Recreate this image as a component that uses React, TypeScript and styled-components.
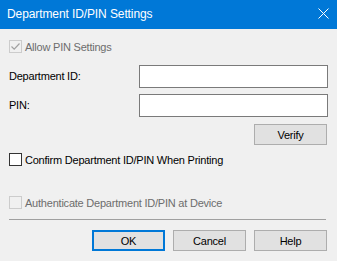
import React from "react";
import styled, { createGlobalStyle } from "styled-components";

const GlobalStyle = createGlobalStyle`
  html, body {
    margin: 0;
    padding: 0;
    background: #f0f0f0;
  }
`;

const Window = styled.div`
  width: 337px;
  height: 261px;
  background: #f0f0f0;
  font-family: "Liberation Sans", Arial, sans-serif;
  font-size: 11px;
  letter-spacing: -0.22px;
  color: #000;
  display: flex;
  flex-direction: column;
  overflow: hidden;
`;

const TitleBar = styled.div`
  height: 29px;
  background: #0078d7;
  color: #fff;
  display: flex;
  align-items: center;
  justify-content: space-between;
  padding: 0 8px 0 7px;
  font-size: 12px;
  letter-spacing: -0.1px;
  flex-shrink: 0;
`;

const Title = styled.span`
  position: relative;
  top: -1px;
`;

const CloseButton = styled.div`
  width: 11px;
  height: 11px;
  display: flex;
  position: relative;
  top: -1px;
`;

const Body = styled.div`
  display: flex;
  flex-direction: column;
  padding: 0 9px;
`;

const CheckRow = styled.label<{ $top: number; $disabled?: boolean }>`
  display: flex;
  align-items: center;
  height: 13px;
  margin-top: ${(p) => p.$top}px;
  color: ${(p) => (p.$disabled ? "#6d6d6d" : "#000")};
`;

const Box = styled.span<{ $disabled?: boolean }>`
  width: 13px;
  height: 13px;
  box-sizing: border-box;
  border: 1px solid ${(p) => (p.$disabled ? "#cccccc" : "#333333")};
  background: ${(p) => (p.$disabled ? "#f0f0f0" : "#ffffff")};
  display: flex;
  align-items: center;
  justify-content: center;
  flex-shrink: 0;
`;

const CheckText = styled.span`
  margin-left: 3px;
  white-space: nowrap;
`;

const FieldRow = styled.div<{ $top: number }>`
  display: grid;
  grid-template-columns: 130px 189px;
  align-items: center;
  height: 23px;
  margin-top: ${(p) => p.$top}px;
`;

const FieldLabel = styled.span`
  position: relative;
  top: -1px;
`;

const TextInput = styled.div`
  height: 23px;
  box-sizing: border-box;
  border: 1px solid #7a7a7a;
  background: #fff;
`;

const ButtonRow = styled.div<{ $top: number }>`
  display: flex;
  justify-content: flex-end;
  gap: 8px;
  padding-right: 1px;
  margin-top: ${(p) => p.$top}px;
`;

const Button = styled.div<{ $default?: boolean }>`
  width: 73px;
  height: 21px;
  box-sizing: border-box;
  border: ${(p) => (p.$default ? "2px solid #0078d7" : "1px solid #adadad")};
  background: #e1e1e1;
  display: flex;
  align-items: center;
  justify-content: center;
`;

const Separator = styled.div`
  height: 1px;
  width: 317px;
  background: #a0a0a0;
  margin-top: 10px;
`;

const Check = () => (
  <svg width="11" height="11" viewBox="0 0 11 11">
    <path d="M1.5 5.5 L4.2 8.2 L9.5 2.5" stroke="#a0a0a0" strokeWidth="1.2" fill="none" />
  </svg>
);

export default function App() {
  return (
    <Window>
      <GlobalStyle />
      <TitleBar>
        <Title>Department ID/PIN Settings</Title>
        <CloseButton>
          <svg width="11" height="11" viewBox="0 0 11 11">
            <path d="M0.5 0.5 L10.5 10.5 M10.5 0.5 L0.5 10.5" stroke="#fff" strokeWidth="1" />
          </svg>
        </CloseButton>
      </TitleBar>
      <Body>
        <CheckRow $top={11} $disabled>
          <Box $disabled>
            <Check />
          </Box>
          <CheckText>Allow PIN Settings</CheckText>
        </CheckRow>
        <FieldRow $top={12}>
          <FieldLabel>Department ID:</FieldLabel>
          <TextInput />
        </FieldRow>
        <FieldRow $top={6}>
          <FieldLabel>PIN:</FieldLabel>
          <TextInput />
        </FieldRow>
        <ButtonRow $top={7}>
          <Button>Verify</Button>
        </ButtonRow>
        <CheckRow $top={8}>
          <Box />
          <CheckText>Confirm Department ID/PIN When Printing</CheckText>
        </CheckRow>
        <CheckRow $top={30} $disabled>
          <Box $disabled />
          <CheckText>Authenticate Department ID/PIN at Device</CheckText>
        </CheckRow>
        <Separator />
        <ButtonRow $top={10}>
          <Button $default>OK</Button>
          <Button>Cancel</Button>
          <Button>Help</Button>
        </ButtonRow>
      </Body>
    </Window>
  );
}
